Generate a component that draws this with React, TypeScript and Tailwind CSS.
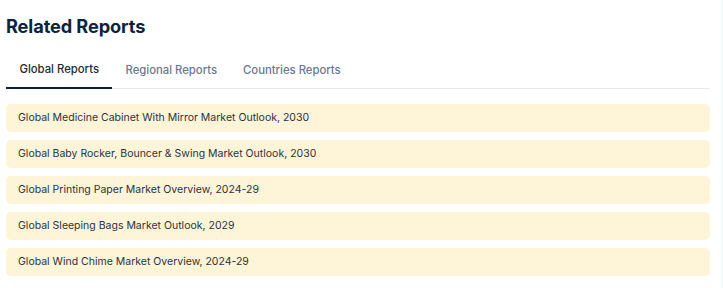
const tabs = ["Global Reports", "Regional Reports", "Countries Reports"];

const reports = [
  "Global Medicine Cabinet With Mirror Market Outlook, 2030",
  "Global Baby Rocker, Bouncer & Swing Market Outlook, 2030",
  "Global Printing Paper Market Overview, 2024-29",
  "Global Sleeping Bags Market Outlook, 2029",
  "Global Wind Chime Market Overview, 2024-29",
];

export default function App() {
  return (
    <div className="flex h-[288px] w-[723px] bg-white font-['Inter',sans-serif]">
      <div className="w-[716px] pl-[6px] pr-[6px] pt-[14px]">
        <h2 className="text-[18.2px] font-bold leading-[24px] tracking-[-0.1px] text-[#0c2340]">
          Related Reports
        </h2>
        <div className="mt-[20px] flex border-b border-[#e5e7eb]">
          {tabs.map((t, i) => (
            <button
              key={t}
              type="button"
              className={
                i === 0
                  ? "-mb-px border-b-2 border-[#0c2340] px-[13.5px] pb-[9px] pt-[3px] text-[11.3px] font-medium text-[#1f2937]"
                  : "px-[13px] pb-[9px] pt-[3px] text-[11.3px] font-medium text-[#6b7891]"
              }
            >
              {t}
            </button>
          ))}
        </div>
        <ul className="mt-[15px] flex flex-col gap-[8px]">
          {reports.map((r) => (
            <li
              key={r}
              className="flex h-[28px] items-center rounded-[5px] bg-[#fef4d8] px-[12px] text-[10.5px] text-[#2b3340]"
            >
              {r}
            </li>
          ))}
        </ul>
      </div>
      <div className="ml-auto w-px bg-[#eefaf8]" />
    </div>
  );
}
